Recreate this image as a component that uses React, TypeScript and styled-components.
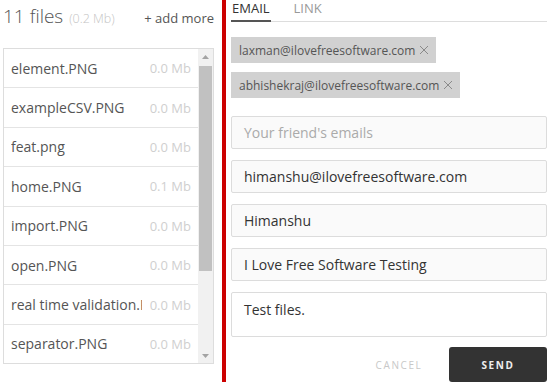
import React from 'react';
import styled, { createGlobalStyle } from 'styled-components';

const GlobalStyle = createGlobalStyle`
  html, body {
    margin: 0;
    padding: 0;
    background: #fff;
  }
  body {
    font-family: "Open Sans", "Liberation Sans", sans-serif;
    width: 550px;
    height: 382px;
    overflow: hidden;
  }
`;

const Page = styled.div`
  display: flex;
  width: 550px;
  height: 382px;
`;

const LeftPanel = styled.div`
  width: 211px;
  padding: 0 8px 0 3px;
  display: flex;
  flex-direction: column;
`;

const Header = styled.div`
  height: 48px;
  box-sizing: border-box;
  padding-top: 3px;
  display: flex;
  align-items: baseline;
  justify-content: space-between;
`;

const Count = styled.div`
  font-size: 19px;
  font-weight: 300;
  color: #555;
  span {
    font-size: 12.5px;
    color: #c4c4c4;
    margin-left: 1px;
  }
`;

const AddMore = styled.div`
  font-size: 13px;
  color: #555;
`;

const FileList = styled.div`
  border: 1px solid #ddd;
  height: 314px;
  display: flex;
`;

const Rows = styled.div`
  flex: 1;
  min-width: 0;
  overflow: hidden;
`;

const FileRow = styled.div`
  height: 38.4px;
  border-bottom: 1px solid #e4e4e4;
  display: flex;
  align-items: center;
  padding: 0 7px;
  font-size: 14px;
  color: #555;
`;

const FileName = styled.div`
  flex: 1;
  min-width: 0;
  overflow: hidden;
  white-space: nowrap;
  text-overflow: clip;
`;

const FileSize = styled.div`
  margin-left: 8px;
  font-size: 13px;
  color: #cfcfcf;
  white-space: nowrap;
`;

const Scrollbar = styled.div`
  width: 15px;
  background: #f1f1f1;
  display: flex;
  flex-direction: column;
`;

const ScrollArrow = styled.div`
  height: 15px;
  display: flex;
  align-items: center;
  justify-content: center;
  color: #a3a3a3;
`;

const ScrollTrack = styled.div`
  flex: 1;
  padding: 2px 1px 0;
`;

const ScrollThumb = styled.div`
  background: #c1c1c1;
`;

const Divider = styled.div`
  width: 4px;
  background: #cc0000;
`;

const RightPanel = styled.div`
  flex: 1;
  padding: 0 3px 0 5px;
  display: flex;
  flex-direction: column;
`;

const Tabs = styled.div`
  display: flex;
  gap: 22px;
  height: 23px;
  border-bottom: 1px solid #ddd;
`;

const Tab = styled.div<{ $active?: boolean }>`
  font-size: 13px;
  line-height: 17px;
  padding: 0 1px;
  color: ${(p) => (p.$active ? '#333' : '#999')};
  border-bottom: 2px solid ${(p) => (p.$active ? '#555' : 'transparent')};
  margin-bottom: -1px;
`;

const Chips = styled.div`
  margin-top: 15px;
  display: flex;
  flex-direction: column;
  align-items: flex-start;
  gap: 9px;
`;

const Chip = styled.div`
  height: 26px;
  display: inline-flex;
  align-items: center;
  gap: 4px;
  padding: 0 7px 0 8px;
  background: #d1d1d1;
  color: #555;
  font-size: 12px;
  svg {
    color: #8a8a8a;
  }
`;

const Form = styled.div`
  margin-top: 18px;
  display: flex;
  flex-direction: column;
  gap: 11px;
`;

const Field = styled.div<{ $tall?: boolean; $placeholder?: boolean }>`
  height: ${(p) => (p.$tall ? '45px' : '33px')};
  box-sizing: border-box;
  border: 1px solid #dcdcdc;
  border-radius: 2px;
  background: ${(p) => (p.$tall ? '#fff' : '#fafafa')};
  padding: ${(p) => (p.$tall ? '7px 12px' : '0 12px')};
  display: flex;
  align-items: ${(p) => (p.$tall ? 'flex-start' : 'center')};
  font-size: 14px;
  color: ${(p) => (p.$placeholder ? '#aaa' : '#333')};
`;

const Actions = styled.div`
  margin-top: 10px;
  display: flex;
  justify-content: flex-end;
  align-items: center;
`;

const CancelButton = styled.div`
  width: 70px;
  margin-right: 15px;
  text-align: center;
  font-size: 10px;
  letter-spacing: 1.6px;
  color: #c8c8c8;
`;

const SendButton = styled.div`
  width: 98px;
  height: 35px;
  border-radius: 3px;
  background: #333;
  color: #eee;
  display: flex;
  align-items: center;
  justify-content: center;
  font-size: 10px;
  font-weight: 700;
  letter-spacing: 1.6px;
`;

const files = [
  { name: 'element.PNG', size: '0.0 Mb' },
  { name: 'exampleCSV.PNG', size: '0.0 Mb' },
  { name: 'feat.png', size: '0.0 Mb' },
  { name: 'home.PNG', size: '0.1 Mb' },
  { name: 'import.PNG', size: '0.0 Mb' },
  { name: 'open.PNG', size: '0.0 Mb' },
  { name: 'real time validation.PNG', size: '0.0 Mb' },
  { name: 'separator.PNG', size: '0.0 Mb' },
  { name: 'settings.PNG', size: '0.0 Mb' },
  { name: 'upload.PNG', size: '0.0 Mb' },
  { name: 'validation.PNG', size: '0.0 Mb' },
];

const VISIBLE_ROWS = 8;

const recipients = ['laxman@ilovefreesoftware.com', 'abhishekraj@ilovefreesoftware.com'];

function CloseIcon() {
  return (
    <svg width="10" height="10" viewBox="0 0 10 10">
      <path d="M1 1L9 9M9 1L1 9" stroke="currentColor" strokeWidth="1" fill="none" />
    </svg>
  );
}

function Arrow({ down }: { down?: boolean }) {
  return (
    <svg width="7" height="4" viewBox="0 0 7 4">
      <path d={down ? 'M0 0H7L3.5 4Z' : 'M0 4H7L3.5 0Z'} fill="currentColor" />
    </svg>
  );
}

export default function App() {
  const thumb = (VISIBLE_ROWS / files.length) * 100;
  return (
    <Page>
      <GlobalStyle />
      <LeftPanel>
        <Header>
          <Count>
            11 files <span>(0.2 Mb)</span>
          </Count>
          <AddMore>+ add more</AddMore>
        </Header>
        <FileList>
          <Rows>
            {files.slice(0, VISIBLE_ROWS).map((f) => (
              <FileRow key={f.name}>
                <FileName>{f.name}</FileName>
                <FileSize>{f.size}</FileSize>
              </FileRow>
            ))}
          </Rows>
          <Scrollbar>
            <ScrollArrow>
              <Arrow />
            </ScrollArrow>
            <ScrollTrack>
              <ScrollThumb style={{ height: `${thumb}%` }} />
            </ScrollTrack>
            <ScrollArrow>
              <Arrow down />
            </ScrollArrow>
          </Scrollbar>
        </FileList>
      </LeftPanel>
      <Divider />
      <RightPanel>
        <Tabs>
          <Tab $active>EMAIL</Tab>
          <Tab>LINK</Tab>
        </Tabs>
        <Chips>
          {recipients.map((r) => (
            <Chip key={r}>
              {r}
              <CloseIcon />
            </Chip>
          ))}
        </Chips>
        <Form>
          <Field $placeholder>Your friend's emails</Field>
          <Field>himanshu@ilovefreesoftware.com</Field>
          <Field>Himanshu</Field>
          <Field>I Love Free Software Testing</Field>
          <Field $tall>Test files.</Field>
        </Form>
        <Actions>
          <CancelButton>CANCEL</CancelButton>
          <SendButton>SEND</SendButton>
        </Actions>
      </RightPanel>
    </Page>
  );
}
